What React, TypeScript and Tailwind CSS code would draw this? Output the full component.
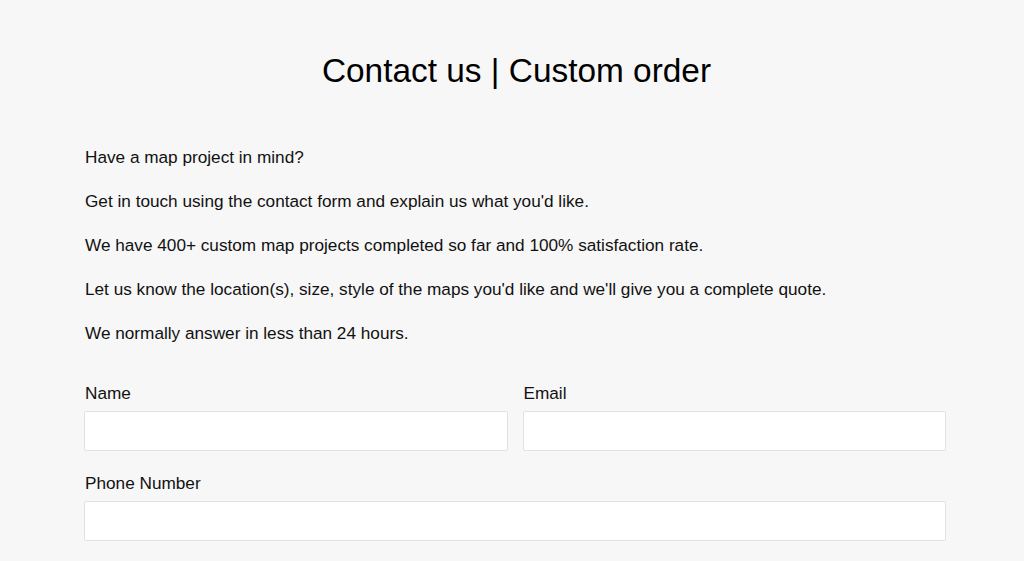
export default function App() {
  const paras = [
    'Have a map project in mind?',
    "Get in touch using the contact form and explain us what you'd like.",
    'We have 400+ custom map projects completed so far and 100% satisfaction rate.',
    "Let us know the location(s), size, style of the maps you'd like and we'll give you a complete quote.",
    'We normally answer in less than 24 hours.',
  ];

  return (
    <div
      className="min-h-[561px] bg-[#f7f7f7] text-[#111] pl-[84px] pr-[78px]"
      style={{ fontFamily: '"Liberation Sans", Arial, sans-serif' }}
    >
      <h1 className="pt-[51px] text-center text-[33.4px] leading-[40px] text-black pl-[3px]">
        Contact us | Custom order
      </h1>

      <div className="mt-[54px] pl-px">
        {paras.map((p, i) => (
          <p key={i} className="text-[17.2px] leading-6 mb-5">{p}</p>
        ))}
      </div>

      <form className="mt-9 flex flex-col gap-5">
        <div className="grid grid-cols-2 gap-[15px]">
          <Field label="Name" />
          <Field label="Email" />
        </div>
        <Field label="Phone Number" />
      </form>
    </div>
  );
}

function Field({ label }: { label: string }) {
  return (
    <label className="block">
      <span className="block text-[17.2px] leading-6 mb-1.5 pl-px">{label}</span>
      <input className="block w-full h-10 bg-white border border-[#e2e2e2] rounded-[2px] outline-none px-3" />
    </label>
  );
}
